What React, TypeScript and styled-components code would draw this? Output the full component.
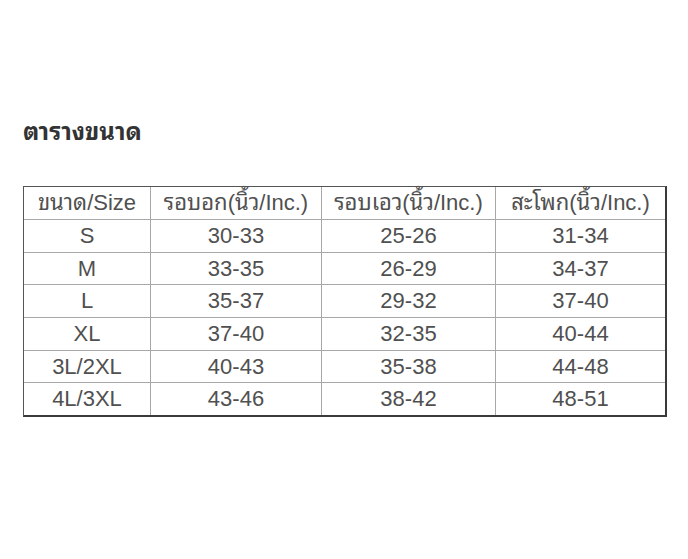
import * as React from 'react'
import styled, { createGlobalStyle } from 'styled-components'

const GlobalStyle = createGlobalStyle`
  html, body {
    margin: 0;
    padding: 0;
    background: #fff;
  }
  body {
    font-family: "Liberation Sans", "Noto Sans Thai Looped", "Noto Sans Thai", "DejaVu Sans", Arial, sans-serif;
  }
`

const Page = styled.div`
  width: 688px;
  height: 559px;
  padding: 117px 21px 0 23px;
  box-sizing: border-box;
`

const Title = styled.h2`
  margin: 0 0 39px 0;
  font-size: 24px;
  font-weight: 700;
  color: #333;
  line-height: 30px;
`

const Table = styled.table`
  width: 644px;
  border-collapse: separate;
  border-spacing: 0;
  border-top: 1px solid #555;
  border-left: 1px solid #555;
  border-right: 2px solid #3a3a3a;
  border-bottom: 2px solid #3a3a3a;
  table-layout: fixed;
  box-sizing: border-box;
`

const Cell = styled.td<{ $head?: boolean; $last?: boolean; $bottom?: boolean }>`
  border-right: ${p => (p.$last ? 'none' : '1px solid #a8a8a8')};
  border-bottom: ${p => (p.$bottom ? 'none' : '1px solid #a8a8a8')};
  text-align: center;
  color: #505050;
  font-size: 22px;
  padding: 0;
  height: ${p => (p.$head ? '32px' : '31.7px')};
  line-height: 24px;
  white-space: nowrap;
`

const widths = [127, 171, 174, 169]

const header = ['ขนาด/Size', 'รอบอก(นิ้ว/Inc.)', 'รอบเอว(นิ้ว/Inc.)', 'สะโพก(นิ้ว/Inc.)']

const rows = [
  ['S', '30-33', '25-26', '31-34'],
  ['M', '33-35', '26-29', '34-37'],
  ['L', '35-37', '29-32', '37-40'],
  ['XL', '37-40', '32-35', '40-44'],
  ['3L/2XL', '40-43', '35-38', '44-48'],
  ['4L/3XL', '43-46', '38-42', '48-51'],
]

const App: React.FC = () => (
  <Page>
    <GlobalStyle />
    <Title>ตารางขนาด</Title>
    <Table>
      <colgroup>
        {widths.map((w, i) => (
          <col key={i} style={{ width: w }} />
        ))}
      </colgroup>
      <tbody>
        <tr>
          {header.map((h, i) => (
            <Cell key={h} $head $last={i === header.length - 1}>
              {h}
            </Cell>
          ))}
        </tr>
        {rows.map((r, ri) => (
          <tr key={r[0]}>
            {r.map((c, i) => (
              <Cell key={i} $last={i === r.length - 1} $bottom={ri === rows.length - 1}>
                {c}
              </Cell>
            ))}
          </tr>
        ))}
      </tbody>
    </Table>
  </Page>
)

export default App
